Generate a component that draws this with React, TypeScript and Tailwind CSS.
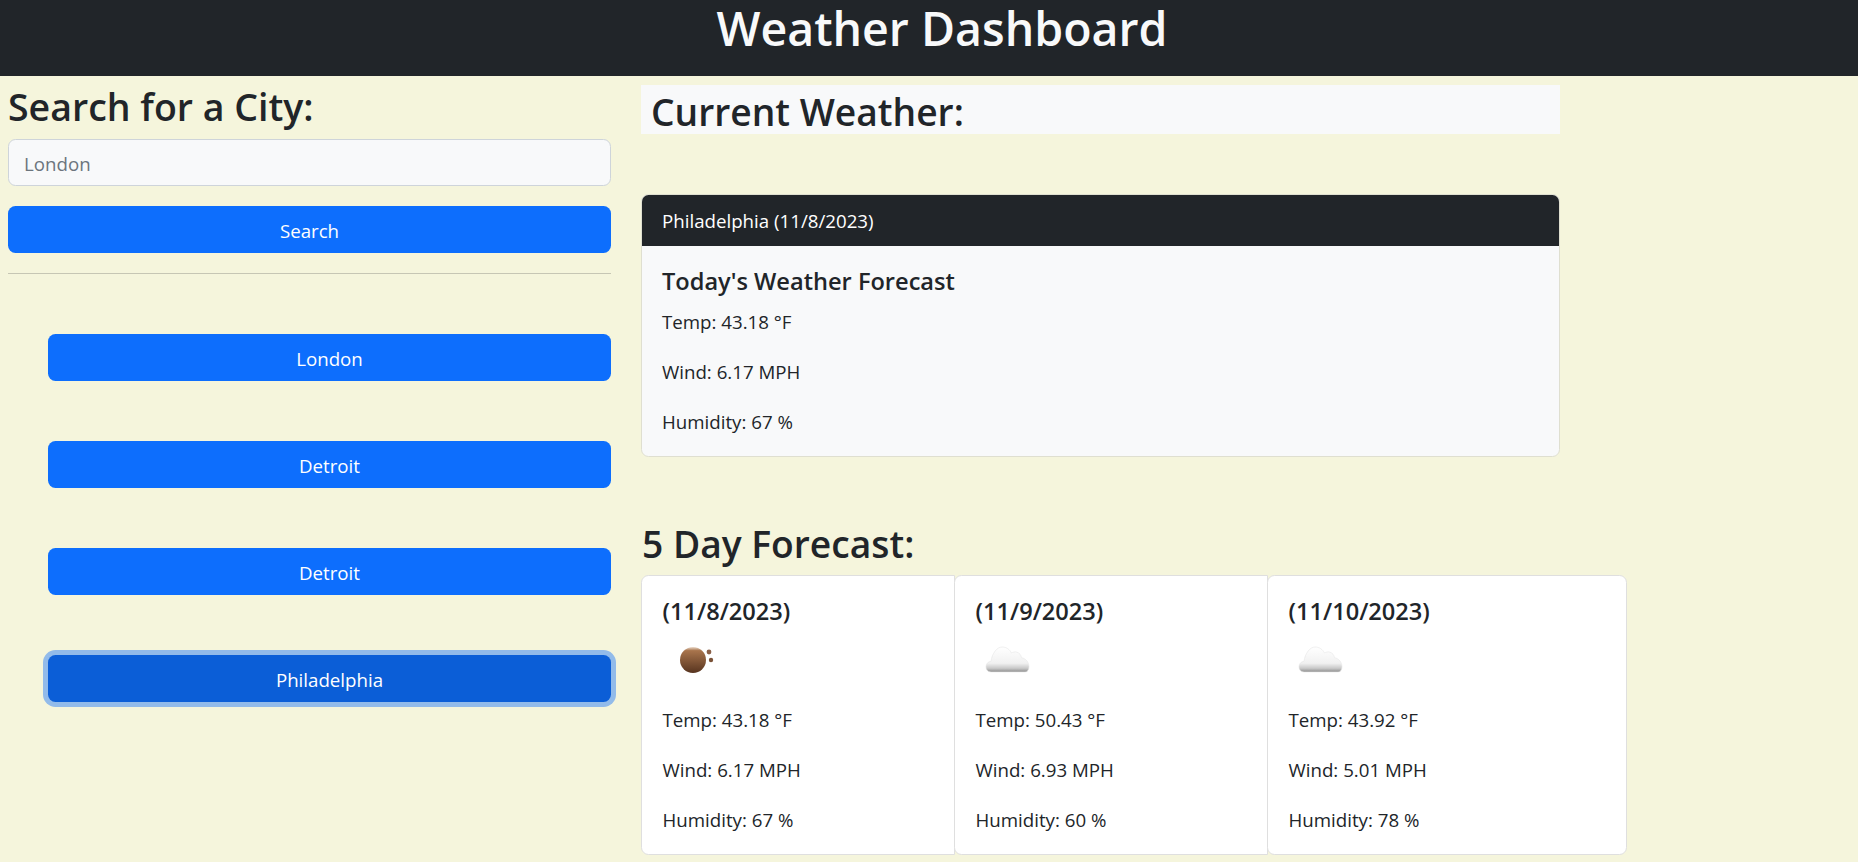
import React from 'react';

const cities = ['London', 'Detroit', 'Detroit'];

const days = [
  { date: '(11/8/2023)', icon: 'dust', temp: '43.18', wind: '6.17', hum: '67', w: 'w-[314px]', round: 'rounded-l-[7.5px]' },
  { date: '(11/9/2023)', icon: 'cloud', temp: '50.43', wind: '6.93', hum: '60', w: 'w-[314px]', round: 'rounded-l-[7.5px] -ml-px' },
  { date: '(11/10/2023)', icon: 'cloud', temp: '43.92', wind: '5.01', hum: '78', w: 'w-[360px]', round: 'rounded-[7.5px] -ml-px' },
];

const DustIcon = () => (
  <svg width="62" height="62" viewBox="0 0 62 62">
    <defs>
      <linearGradient id="dust" x1="0" y1="0" x2="0" y2="1">
        <stop offset="0" stopColor="#ecdccd" />
        <stop offset="0.14" stopColor="#a8744c" />
        <stop offset="1" stopColor="#57341f" />
      </linearGradient>
    </defs>
    <circle cx="30" cy="31" r="13" fill="url(#dust)" />
    <circle cx="46" cy="23" r="2.4" fill="#8a6048" />
    <circle cx="48" cy="31" r="2.2" fill="#7a5238" />
  </svg>
);

const CloudIcon = () => (
  <svg width="62" height="62" viewBox="0 0 62 62">
    <defs>
      <linearGradient id="cloud" x1="0" y1="0" x2="0" y2="1">
        <stop offset="0" stopColor="#ffffff" />
        <stop offset="0.65" stopColor="#f1f1f1" />
        <stop offset="0.85" stopColor="#c9c9c9" />
        <stop offset="1" stopColor="#8e8e8e" />
      </linearGradient>
    </defs>
    <path
      d="M15 43c-3.500 0-5-2.600-5-5.200 0-3 2.200-5.300 5-5.500C16 24.500 21 18 26 18c4.500 0 7.500 2.300 9.500 6 1.500-1 3.500-1.400 5.500-.8 2.500.8 4 2.800 4.500 5.500 3.500.5 7.500 4 7.500 9 0 3-1.500 5.300-4 5.300z"
      fill="url(#cloud)"
      stroke="#e6e6e6"
      strokeWidth="0.6"
    />
  </svg>
);

export default function App() {
  return (
    <div className="bg-[#f5f5dc] text-[#212529] h-screen overflow-hidden font-['Open_Sans',sans-serif] text-[18.7px]">
      <header className="bg-[#212529] h-[76px] pl-[26px] text-center text-[#f8f9fa]">
        <h1 className="text-[46.500px] leading-[56px] font-semibold">Weather Dashboard</h1>
      </header>

      <div className="flex pl-2">
        {/* search column */}
        <div className="w-[603px] pt-[7px]">
          <h2 className="text-[37.500px] leading-[48px] font-semibold mb-[8px]">Search for a City:</h2>
          <input
            placeholder="London"
            className="block w-full h-[47px] bg-[#f8f9fa] border border-[#ced4da] rounded-[7.5px] px-[15px] pt-[1px] placeholder:text-[#6c757d]"
          />
          <button className="block w-full h-[47px] mt-5 pt-[3px] bg-[#0d6efd] text-white rounded-[7.5px]">Search</button>
          <hr className="mt-5 border-[#c6c6b4]" />
          <div className="pl-10 pt-[60px] flex flex-col gap-[60px]">
            {cities.map((c, i) => (
              <button key={i} className="block w-full h-[47px] pt-[3px] bg-[#0d6efd] text-white rounded-[7.5px]">
                {c}
              </button>
            ))}
            <button className="block w-full h-[47px] pt-[3px] bg-[#0b5ed7] text-white rounded-[7.5px] ring-[5px] ring-[#92bbea]">
              Philadelphia
            </button>
          </div>
        </div>

        {/* weather column */}
        <div className="w-[1000px] ml-[30px] pt-[9px]">
          <div className="w-[919px] h-[49px] bg-[#f8f9fa] pl-[10px]">
            <h2 className="text-[37.200px] leading-[53px] font-semibold">Current Weather:</h2>
          </div>

          <div className="w-[919px] mt-[60px] border border-[#dfdfd0] rounded-[7.5px] overflow-hidden bg-[#f8f9fa]">
            <div className="bg-[#212529] text-white h-[51px] px-5 leading-[52px]">Philadelphia (11/8/2023)</div>
            <div className="px-5 pt-5 pb-[19px]">
              <h5 className="text-[23.600px] leading-[30px] font-[570] mb-[11px]">Today's Weather Forecast</h5>
              <p className="leading-[30px] mb-5">Temp: 43.18 °F</p>
              <p className="leading-[30px] mb-5">Wind: 6.17 MPH</p>
              <p className="leading-[30px]">Humidity: 67 %</p>
            </div>
          </div>

          <h2 className="text-[37.200px] leading-[48px] pl-[1px] font-semibold mt-[63px] mb-[7px]">5 Day Forecast:</h2>

          <div className="flex">
            {days.map((d) => (
              <div key={d.date} className={`${d.w} ${d.round} bg-white border border-[#dfdfdf] pl-[20.500px] pr-5 pt-5 pb-[19px]`}>
                <h5 className="text-[23.600px] leading-[30px] font-[570]">{d.date}</h5>
                <div className="h-[62px] mt-[3px] mb-[14px]">{d.icon === 'dust' ? <DustIcon /> : <CloudIcon />}</div>
                <p className="leading-[30px] mb-5">Temp: {d.temp} °F</p>
                <p className="leading-[30px] mb-5">Wind: {d.wind} MPH</p>
                <p className="leading-[30px]">Humidity: {d.hum} %</p>
              </div>
            ))}
          </div>
        </div>
      </div>
    </div>
  );
}
